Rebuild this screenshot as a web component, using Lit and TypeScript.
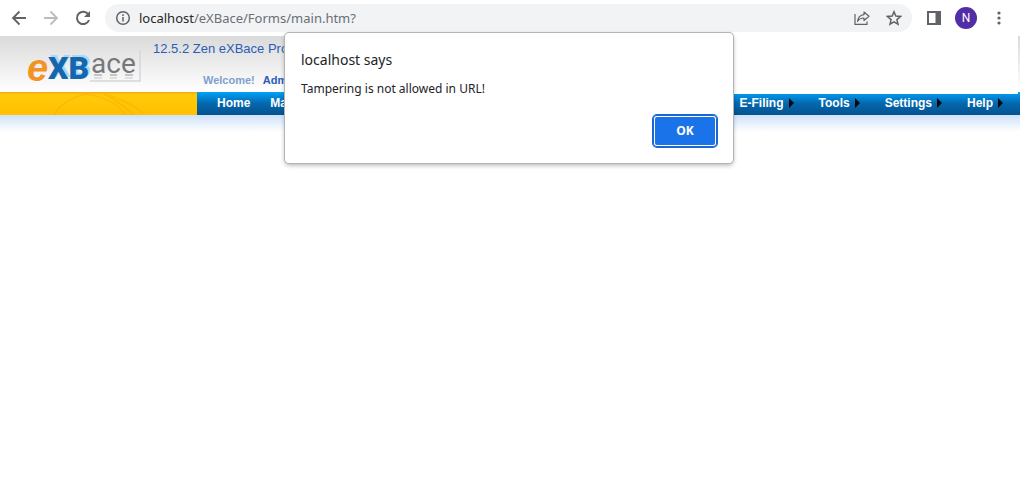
import { LitElement, html, css } from "lit";
import { customElement } from "lit/decorators.js";

@customElement("browser-toolbar")
class BrowserToolbar extends LitElement {
  static styles = css`
    :host {
      display: flex;
      align-items: center;
      height: 36px;
      padding: 0 12px 0 8px;
      box-sizing: border-box;
      background: #fff;
      font-family: "Noto Sans", "Open Sans", sans-serif;
    }
    button {
      border: 0;
      padding: 0;
      background: none;
      display: grid;
      place-items: center;
      color: #5f6368;
    }
    svg { display: block; }
    .nav { display: flex; gap: 10px; }
    .nav button { width: 22px; height: 28px; }
    .nav .off { color: #babcbe; }
    .omnibox {
      flex: 1;
      display: flex;
      align-items: center;
      height: 28px;
      margin: 0 14px 0 11px;
      padding: 0 10px;
      border-radius: 14px;
      background: #f1f3f4;
      color: #6b6f74;
    }
    .address { flex: 1; margin-left: 8px; font-size: 13px; line-height: 20px; }
    .address b { font-weight: 400; color: #26282b; }
    .tools { display: flex; gap: 16px; }
    .right { display: flex; align-items: center; gap: 13px; }
    .avatar {
      width: 22px;
      height: 22px;
      border-radius: 50%;
      background: #512da8;
      color: #fff;
      font: 12px/22px Roboto, sans-serif;
    }
  `;
  render() {
    return html`
      <div class="nav">
        <button aria-label="Back">
          <svg width="22" height="22" viewBox="0 0 22 22" fill="none" stroke="currentColor" stroke-width="1.8"><path d="M18 11H5M11.5 4.5L5 11l6.500 6.500" /></svg>
        </button>
        <button class="off" aria-label="Forward">
          <svg width="22" height="22" viewBox="0 0 22 22" fill="none" stroke="currentColor" stroke-width="1.8"><path d="M4 11h13M10.500 4.500L17 11l-6.500 6.500" /></svg>
        </button>
        <button aria-label="Reload">
          <svg width="22" height="22" viewBox="0 0 22 22" fill="none" stroke="currentColor" stroke-width="2"><path d="M16.400 7.500A6.200 6.200 0 1 0 17 13" /><path d="M18 4v6h-6z" fill="currentColor" stroke="none" /></svg>
        </button>
      </div>
      <div class="omnibox">
        <button aria-label="Site information">
          <svg width="16" height="16" viewBox="0 0 16 16" fill="none" stroke="currentColor" stroke-width="1.5"><circle cx="8" cy="8" r="6.300" /><path d="M8 7v4.500M8 4.300v1.600" /></svg>
        </button>
        <div class="address"><b>localhost</b>/eXBace/Forms/main.htm?</div>
        <div class="tools">
          <button aria-label="Share">
            <svg width="16" height="16" viewBox="0 0 16 16" fill="none" stroke="currentColor" stroke-width="1.200"><path d="M1 4v10.400h12v-3" /><path d="M10 2l5 4.300-5 4.200V8C7 8 5 9 3.500 11.300 4 7.500 6.300 5 10 4.600z" stroke-linejoin="round" /></svg>
          </button>
          <button aria-label="Bookmark">
            <svg width="16" height="16" viewBox="0 0 16 16" fill="none" stroke="currentColor" stroke-width="1.500"><path d="M8 1.800l1.800 4.300 4.700.4-3.600 3.100 1.100 4.600L8 11.800l-4 2.400 1.100-4.600L1.500 6.500l4.700-.4z" /></svg>
          </button>
        </div>
      </div>
      <div class="right">
        <button aria-label="Side panel">
          <svg width="16" height="16" viewBox="0 0 16 16"><path fill="currentColor" fill-rule="evenodd" d="M1 1h14v14H1zM3 3v10h6.500V3z" /></svg>
        </button>
        <button class="avatar" aria-label="Profile">N</button>
        <button aria-label="Menu">
          <svg width="18" height="18" viewBox="0 0 18 18" fill="currentColor"><circle cx="9" cy="4" r="1.600" /><circle cx="9" cy="9" r="1.600" /><circle cx="9" cy="14" r="1.600" /></svg>
        </button>
      </div>
    `;
  }
}

@customElement("app-root")
class AppRoot extends LitElement {
  static styles = css`
    :host {
      display: block;
      position: relative;
      min-height: 100vh;
      background: #fff;
      overflow: hidden;
      font-family: "Liberation Sans", Arial, sans-serif;
    }
    .header {
      display: flex;
      height: 56px;
      background: linear-gradient(#dadada, #fff);
    }
    .logo { margin-left: 24px; display: block; overflow: visible; }
    .info { display: flex; flex-direction: column; gap: 16px; padding: 5px 0 0 11px; white-space: nowrap; }
    .product { font-size: 13px; line-height: 16px; color: #2a5db8; }
    .user { display: flex; gap: 8px; padding-left: 50px; font-size: 11px; line-height: 14px; font-weight: 700; color: #7f9fd3; }
    .user b { color: #2a5db8; }
    .bar { display: flex; height: 23px; }
    .gold { width: 197px; height: 23px; flex: none; display: block; }
    nav {
      flex: 1;
      display: flex;
      justify-content: space-between;
      padding: 0 16px 0 20px;
      background: linear-gradient(#00a2fa, #0567ac 50%, #04528f);
    }
    .group { display: flex; gap: 20px; }
    .group.end { gap: 24px; }
    a { display: flex; align-items: center; gap: 5px; height: 21px; color: #fff; font-size: 12px; font-weight: 700; text-decoration: none; }
    .arrow { width: 6px; height: 10px; fill: #06080c; }
    .fade { height: 17px; background: linear-gradient(#cfe2f8, #fff); }
    .panel {
      position: absolute;
      top: 36px;
      left: calc(50% + 223px);
      right: 2px;
      height: 58px;
      background: #fff;
    }
    dialog {
      position: absolute;
      top: 33px;
      left: 0;
      right: 2px;
      width: 448px;
      margin: 0 auto;
      padding: 16px 16px 16px;
      border: 0;
      border-radius: 4px;
      box-sizing: border-box;
      background: #fff;
      color: #222428;
      box-shadow: 0 0 0 1px #b4b4b4, 0 2px 5px #0005;
      font-family: "Noto Sans", "Open Sans", sans-serif;
    }
    h1 { margin: 0; font-size: 14px; line-height: 22px; font-weight: 400; }
    p { margin: 9px 0 17px; font-size: 12px; line-height: 18px; }
    .ok {
      display: block;
      margin-left: auto;
      width: 64px;
      height: 32px;
      padding: 0;
      border: 0;
      border-radius: 4px;
      color: #fff;
      background: #1a73e8;
      box-shadow: inset 0 0 0 1px #1967d2, inset 0 0 0 2px #fff, 0 0 0 1px #1967d2;
      font: 700 12px/32px "Open Sans", sans-serif;
    }
  `;

  private menu = ["E-Filing", "Tools", "Settings", "Help"];

  render() {
    return html`
      <browser-toolbar></browser-toolbar>
      <header class="header">
        <svg class="logo" width="118" height="56" viewBox="0 0 118 56">
          <defs>
            <linearGradient id="mirror" x1="0" y1="0" x2="0" y2="1"><stop offset="0" stop-color="#bbb" /><stop offset="1" stop-color="#eee" /></linearGradient>
          </defs>
          <path d="M66 45H116V14" fill="none" stroke="#d6d6d6" stroke-width="1.500" />
          <text x="26" y="41" font-family="Roboto" font-weight="900" font-size="32" fill="#a9d8f5">XB</text>
          <text x="24" y="43" font-family="Roboto" font-weight="900" font-size="32" fill="#1467ad">XB</text>
          <text x="3" y="45" font-family="Liberation Sans" font-weight="700" font-style="italic" font-size="38" fill="#f29425">e</text>
          <path d="M70 39h8M86 39h7M101 39h8" stroke="#c4c4c4" stroke-width="2" />
          <path d="M70 42h8M86 42h7M101 42h8" stroke="#dedede" stroke-width="2" />
          <text x="67" y="37" font-family="Roboto" font-size="28" fill="#77787c">ace</text>
        </svg>
        <div class="info">
          <div class="product">12.5.2 Zen eXBace Pro</div>
          <div class="user"><span>Welcome!</span><b>Adm</b></div>
        </div>
      </header>
      <div class="bar">
        <svg class="gold" viewBox="0 0 197 23">
          <defs>
            <linearGradient id="gold" x1="0" y1="0" x2="0" y2="1"><stop offset="0" stop-color="#f5a713" /><stop offset=".12" stop-color="#ffca0a" /><stop offset="1" stop-color="#ffc000" /></linearGradient>
          </defs>
          <rect width="197" height="23" fill="url(#gold)" />
          <path d="M54 23Q62 8 86 2M82 2Q112 4 126 23M104 2Q124 7 144 21M104 2Q120 10 134 23" fill="none" stroke="#f5a300" stroke-opacity=".35" stroke-width="1.500" />
        </svg>
        <nav>
          <div class="group"><a href="#home">Home</a><a href="#ma">Ma</a></div>
          <div class="group end">
            ${this.menu.map((name) => html`<a href="#${name}">${name}<svg class="arrow" viewBox="0 0 6 10"><path d="M0 0l5 5-5 5z" /></svg></a>`)}
          </div>
        </nav>
      </div>
      <div class="fade"></div>
      <div class="panel"></div>
      <dialog open aria-labelledby="says">
        <h1 id="says">localhost says</h1>
        <p>Tampering is not allowed in URL!</p>
        <button class="ok">OK</button>
      </dialog>
    `;
  }
}
